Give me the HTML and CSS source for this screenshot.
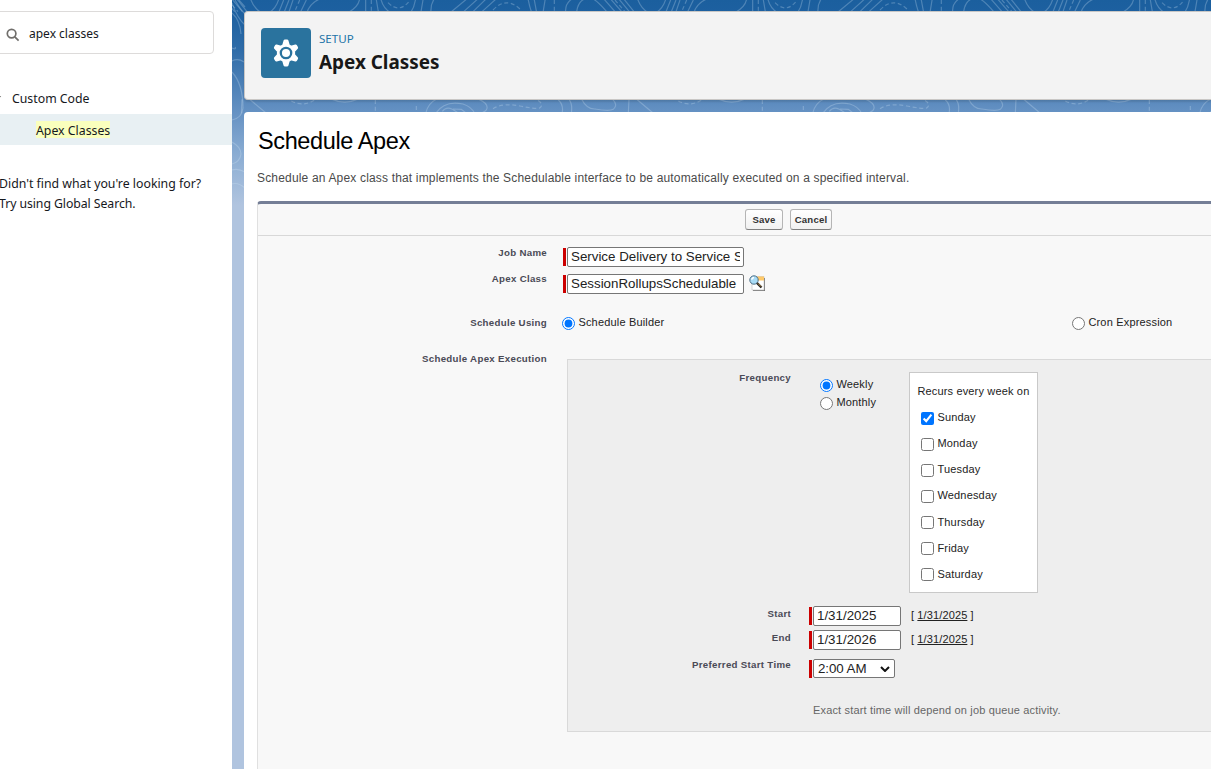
FILE: index.html
```html
<!DOCTYPE html>
<html lang="en">
<head>
<meta charset="utf-8">
<title>Apex Classes</title>
<link rel="stylesheet" href="styles.css">
</head>
<body>
<div class="app">
  <aside class="sidebar">
    <div class="search">
      <svg class="search-icon" viewBox="0 0 14 14"><circle cx="5.6" cy="5.6" r="4.3"/><path d="M8.800 8.800l3.800 3.800"/></svg>
      <span class="search-text">apex classes</span>
    </div>
    <div class="tree-head"><svg class="chevron" viewBox="0 0 8 5"><path d="M0 0h8L4 5z"/></svg><span>Custom Code</span></div>
    <div class="tree-item"><mark>Apex Classes</mark></div>
    <p class="hint">Didn't find what you're looking for?<br><span class="hint-link">Try using Global Search.</span></p>
  </aside>
  <main class="main">
    <svg class="topo" width="979" height="210" viewBox="0 0 979 210">
      <defs>
        <g id="tile">
          <path stroke-dasharray="12 8" d="M13 0V35M410 0L395 35M625 0V35M675 8Q710 42 740 2M990 30Q1030-12 1072 28M195 0L225 35M385 303Q420 322 455 300M637 300V335M760 318V335M990 326Q1020 308 1070 318T1130 324Q1145 312 1122 300"/>
          <path d="M68-5Q45 10 47 35M80 35Q85 0 110-5M125-5Q140 0 170 35M160-5L195 35M180-5L215 35M205-5L238 35M220-5L252 35M262-5Q272 25 295 38M348-5Q340 25 318 38M362 0L348 35M378 0L364 35M390 0L378 35M430 0L413 35M432 38Q440 8 475-5M590-5Q588 20 555 38M608 0V35M640 0L646 35M653-5Q660 25 683 38M758-5Q755 20 743 38M780 0L774 35M804 38Q802 12 815-5M865 35L910-2M902 35L943-2M930 35L968-2M957 35L998-2M1095-5Q1098 15 1106 38M1113-5L1121 38M1147-5L1140 38M25 300Q42 315 36 340M58 300Q68 312 64 340M95 298Q110 328 135 327Q178 335 190 328Q205 315 188 298M237 298L235 340M260 298L310 340M508 298Q545 315 582 298M788 340Q795 310 820 298M818 340Q845 300 900 312Q925 320 935 340M838 334Q850 318 868 328L885 338M870 327L895 328L910 340M948 298Q975 310 972 325Q970 335 950 340"/>
        </g>
      </defs>
      <g transform="translate(318 0) scale(.33333)">
        <use href="#tile" x="-1161"/><use href="#tile"/><use href="#tile" x="1161"/>
      </g>
      <path d="M0 3Q5 18 13 25M0 13Q8 20 9 34M0 48Q5 50 3 47M0 61Q6 58 12 62M0 72Q11 84 11 108Q10 118 0 120M0 142Q9 147 9 154Q8 162 0 164M0 170Q6 168 13 172M0 184Q6 182 13 188M3 0Q8 9 13 14M7 0L13 7"/>
    </svg>
    <header class="page-head">
      <span class="setup-icon"><svg viewBox="0 0 28 28"><path fill="#fff" stroke="#fff" stroke-width="3" stroke-linejoin="round" d="M13 1.900h2l1.300 4.600 2.900 1.700 4.400-1.200 1 1.800-3 3.300v3.800l3 3.300-1 1.800-4.400-1.200-2.900 1.700-1.300 4.600h-2l-1.300-4.600-2.900-1.700-4.400 1.200-1-1.800 3-3.300v-3.800l-3-3.300 1-1.800 4.400 1.200 2.900-1.700z"/><circle cx="14" cy="14" r="5.200" fill="#fff" stroke="#2a739e" stroke-width="2.300"/></svg></span>
      <div class="head-text"><span class="eyebrow">SETUP</span><h1>Apex Classes</h1></div>
    </header>
    <section class="card">
      <h2>Schedule Apex</h2>
      <p class="desc">Schedule an Apex class that implements the Schedulable interface to be automatically executed on a specified interval.</p>
      <form class="form">
        <div class="buttons"><button type="button" class="btn save">Save</button><button type="button" class="btn cancel">Cancel</button></div>
        <div class="row row-job"><label>Job Name</label><div class="req"><input type="text" class="text-in" value="Service Delivery to Service Session"></div></div>
        <div class="row row-class"><label>Apex Class</label><div class="req"><input type="text" class="text-in" value="SessionRollupsSchedulable">
          <svg class="lookup" viewBox="0 0 16 16"><path fill="#777" d="M4 3h12v13H4z"/><path fill="#fff" stroke="#bbb" stroke-width=".6" d="M3 1.500h12v13.500H3z"/><path fill="#ffc969" d="M8 1.500h7v4H8z"/><circle cx="5" cy="5" r="4.200" fill="#a9dcf6" stroke="#4f6f86" stroke-width="1"/><path d="M2.700 4.700Q3 2.700 5 2.500" stroke="#fff" stroke-width="1.500" fill="none"/><path d="M8 8l4.500 4.500" stroke="#222" stroke-width="2.400"/><path d="M9 8.500l3 3" stroke="#e0a850" stroke-width=".9"/></svg></div></div>
        <div class="row row-using"><label>Schedule Using</label><div class="opts"><span class="opt"><input type="radio" name="using" checked><span>Schedule Builder</span></span><span class="opt"><input type="radio" name="using"><span>Cron Expression</span></span></div></div>
        <div class="row row-exec"><label>Schedule Apex Execution</label>
          <div class="panel">
            <div class="prow prow-freq"><label>Frequency</label>
              <div class="freq"><span class="opt"><input type="radio" name="freq" checked><span>Weekly</span></span><span class="opt"><input type="radio" name="freq"><span>Monthly</span></span></div>
              <div class="days"><p>Recurs every week on</p>
                <span class="opt"><input type="checkbox" checked><span>Sunday</span></span>
                <span class="opt"><input type="checkbox"><span>Monday</span></span>
                <span class="opt"><input type="checkbox"><span>Tuesday</span></span>
                <span class="opt"><input type="checkbox"><span>Wednesday</span></span>
                <span class="opt"><input type="checkbox"><span>Thursday</span></span>
                <span class="opt"><input type="checkbox"><span>Friday</span></span>
                <span class="opt"><input type="checkbox"><span>Saturday</span></span>
              </div>
            </div>
            <div class="prow prow-date"><label>Start</label><div class="req"><input type="text" class="date-in" value="1/31/2025"></div><span class="today">[ <a>1/31/2025</a> ]</span></div>
            <div class="prow prow-date"><label>End</label><div class="req"><input type="text" class="date-in" value="1/31/2026"></div><span class="today">[ <a>1/31/2025</a> ]</span></div>
            <div class="prow prow-time"><label>Preferred Start Time</label><div class="req"><span class="select"><span>2:00 AM</span><svg viewBox="0 0 10 6"><path d="M1 1l4 4 4-4"/></svg></span></div></div>
            <p class="note">Exact start time will depend on job queue activity.</p>
          </div>
        </div>
      </form>
    </section>
  </main>
</div>
</body>
</html>
```
FILE: styles.css
```css
* { box-sizing: border-box; }
body { margin: 0; overflow: hidden; background: #fff; font-family: "Liberation Sans", Arial, sans-serif; font-size: 11px; color: #222; }
h1, h2, p { margin: 0; font-weight: 400; white-space: nowrap; }
.app { display: flex; width: 1211px; height: 769px; overflow: hidden; }

.sidebar { width: 232px; flex: none; padding-top: 11px; overflow: hidden; font-family: "Noto Sans", sans-serif; font-size: 12.3px; color: #16181d; white-space: nowrap; }
.search { display: flex; align-items: center; width: 218px; height: 43px; margin-left: -4px; padding-left: 9px; border: 1px solid #dddbda; border-radius: 4px; }
.search-icon { width: 14px; height: 14px; margin-top: 4px; fill: none; stroke: #706e6b; stroke-width: 1.7; }
.search-text { margin: 2px 0 0 9px; line-height: 20px; font-size: 12px; }
.tree-head { display: flex; align-items: center; height: 32px; margin-top: 28px; }
.chevron { width: 8px; height: 4px; margin-left: -6px; margin-right: 10px; fill: #706e6b; }
.tree-item { height: 31px; padding: 7px 0 0 36px; background: #e8f0f3; line-height: 19px; }
mark { display: inline-block; height: 17px; background: #faffbd; color: inherit; }
.hint { margin: 29px 0 0 -1px; line-height: 20px; }
.hint-link { letter-spacing: -.08px; }

.main { position: relative; width: 979px; height: 769px; padding: 11px 0 0 12px; background: linear-gradient(#1b5f9e 0, #1d60a0 12px, #2f6ca8 50px, #6390c2 110px, #8badd3 155px, #b0c4df 205px); }
.topo { position: absolute; left: 0; top: 0; fill: none; }
.topo path { stroke: #d5e8f8; stroke-opacity: .27; stroke-width: 3.6; }
.topo > path { stroke-width: 1.2; }
.page-head, .card { position: relative; background: #fff; }
.page-head { display: flex; height: 89px; padding: 16px; border: 1px solid #c9c7c5; border-right: 0; border-radius: 4px 0 0 4px; background: #f3f3f3; box-shadow: 0 2px 2px rgba(0,0,0,.12); }
.setup-icon { display: grid; place-items: center; width: 50px; height: 50px; border-radius: 4px; background: #2a739e; }
.setup-icon svg { width: 28px; height: 28px; }
.head-text { display: flex; flex-direction: column; align-items: flex-start; margin-left: 8px; font-family: "Noto Sans", sans-serif; }
.eyebrow { height: 20px; line-height: 21px; font-size: 11.6px; color: #2274a8; }
h1 { line-height: 28px; font-size: 18.9px; font-weight: 700; color: #181818; }
.card { height: 657px; margin-top: 12px; padding: 15px 0 0 13px; border-radius: 4px 0 0 0; }
h2 { padding-left: 1px; line-height: 28px; font-size: 23.5px; letter-spacing: -.38px; color: #000; }
.desc { margin-top: 15px; line-height: 16px; font-size: 12px; letter-spacing: .17px; color: #4a4a4a; }

.form { height: 570px; margin-top: 15px; border-top: 3px solid #747e96; border-left: 1px solid #e0e0e0; border-radius: 4px 0 0 0; background: #f8f8f8; }
.buttons { display: flex; gap: 7px; height: 32px; padding: 5px 0 0 487px; border-bottom: 1px solid #d8d8d8; }
.btn { height: 21px; padding: 0; border: 1px solid #b5b5b5; border-bottom-color: #7f7f7f; border-radius: 3px; background: linear-gradient(#fff, #f1f1f1); font: 700 9.6px "Liberation Sans", Arial, sans-serif; color: #333; letter-spacing: .2px; }
.save { width: 38px; }
.cancel { width: 42px; }
label { text-align: right; font-size: 9.7px; font-weight: 700; line-height: 12px; color: #4a4a56; letter-spacing: .3px; white-space: nowrap; }
.row { display: grid; grid-template-columns: 289px 1fr; column-gap: 16px; }
.row-job { height: 27px; padding-top: 11px; }
.row-class { height: 45px; padding-top: 11px; }
.row-class label { margin-top: -1px; }
.req { position: relative; display: flex; align-items: flex-start; height: 20px; padding-left: 4px; }
.req::before { content: ""; position: absolute; left: 0; top: 1px; width: 3px; height: 18px; background: #c00; }
input[type=text], .select { height: 20px; padding: 0 3px; border: 1px solid #767676; border-radius: 2px; background: #fff; font: 13.333px "Liberation Sans", Arial, sans-serif; color: #222; }
input[type=text] { padding-bottom: 2px; }
.text-in { width: 177px; }
.lookup { width: 16px; height: 16px; margin-left: 5px; margin-top: 1px; }
.opt { display: flex; align-items: center; line-height: 14px; font-size: 11px; white-space: nowrap; letter-spacing: .18px; }
input[type=radio], input[type=checkbox] { width: 13px; height: 13px; margin: 0 3.4px 0 0; flex: none; accent-color: #0075ff; }
.opt > span { position: relative; top: -1px; }
.row-using { height: 51px; padding-top: 8px; }
.row-using label { margin-top: 1px; }
.opts { display: grid; grid-template-columns: 510px 1fr; height: 14px; margin-left: -1px; }
.row-exec { column-gap: 20px; }
.row-exec > label { margin-top: -6px; }
.panel { height: 373px; border: 1px solid #d9d9d9; border-right: 0; background: #eee; }
.prow { display: grid; grid-template-columns: 223px 82px 1fr; column-gap: 18px; }
.prow-freq { height: 246px; padding-top: 12px; grid-template-columns: 223px 60px 1fr; column-gap: 29px; }
.freq { padding-top: 6px; }
.freq .opt { height: 18px; margin-top: -2px; margin-bottom: 2px; }
.days { width: 129px; height: 221px; padding: 11px 0 0 7px; border: 1px solid #c9c9c9; background: #fff; }
.days p { height: 21px; padding-left: .4px; line-height: 15px; letter-spacing: .16px; }
.days .opt { height: 26.15px; padding-left: 4px; }
.prow-date { grid-template-columns: 223px 92px 1fr; height: 24px; }
.date-in { width: 88px; }
.prow-date .today { margin-left: -8px; line-height: 18px; letter-spacing: .12px; }
.prow label { margin-top: 2px; }
.prow-freq label { margin-top: 0; }
.today a { text-decoration: underline; }
.prow-time { margin-top: 5px; height: 44px; }
.prow-time label { margin-top: 0; }
.select { display: flex; align-items: center; flex: none; width: 82px; height: 19px; padding: 0 4px; line-height: 15px; }
.select span { margin-top: -1px; letter-spacing: -.06px; }
.select svg { width: 10px; height: 6px; margin-left: auto; fill: none; stroke: #111; stroke-width: 2; }
.note { padding-left: 245px; line-height: 15px; letter-spacing: .16px; color: #666; }
```
